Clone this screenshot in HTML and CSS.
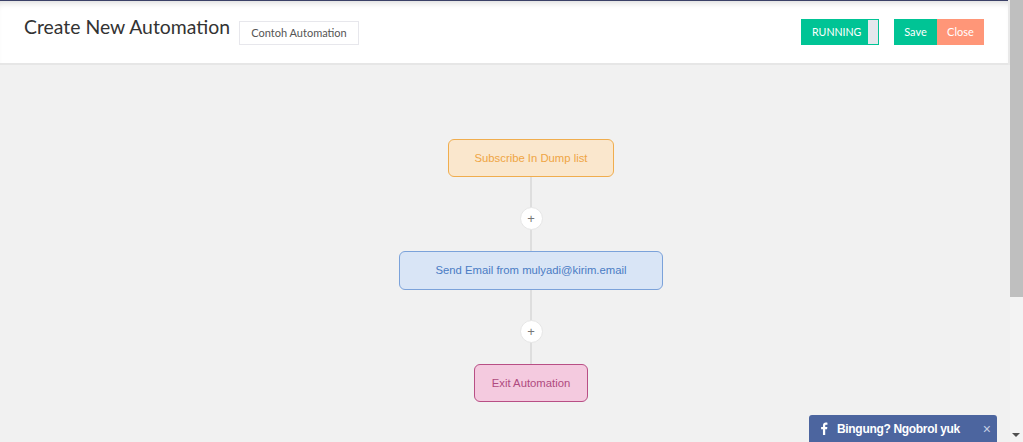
FILE: index.html
```html
<!DOCTYPE html>
<html lang="id">
<head>
<meta charset="utf-8">
<title>Create New Automation</title>
<link rel="stylesheet" href="styles.css">
</head>
<body>
<div class="page">
  <header class="topbar">
    <div class="title-group">
      <h1 class="title">Create New Automation</h1>
      <span class="name-box">Contoh Automation</span>
    </div>
    <div class="actions">
      <div class="toggle"><span class="toggle-label">RUNNING</span><span class="toggle-knob"></span></div>
      <div class="btn-group">
        <button class="btn btn-save">Save</button>
        <button class="btn btn-close">Close</button>
      </div>
    </div>
  </header>
  <main class="canvas">
    <div class="node node-list">Subscribe In Dump list</div>
    <div class="connector"><span class="add">+</span></div>
    <div class="node node-email">Send Email from mulyadi@kirim.email</div>
    <div class="connector"><span class="add">+</span></div>
    <div class="node node-exit">Exit Automation</div>
  </main>
</div>
<aside class="scrollbar"><div class="thumb"></div><div class="arrow"></div></aside>
<div class="chat">
  <svg class="fb" viewBox="0 0 10 16" width="8" height="13"><path d="M6.5 16V9h2.3l.4-2.8H6.5V4.5c0-.8.2-1.3 1.3-1.3h1.5V.7C9 .7 8.200 .6 7.300 .6 5.200 .6 3.700 1.900 3.700 4.200v2H1.400V9h2.300v7z" fill="#fff"/></svg>
  <span class="chat-text">Bingung? Ngobrol yuk</span>
  <span class="chat-x">×</span>
</div>
</body>
</html>
```
FILE: styles.css
```css
* { box-sizing: border-box; }
html, body { margin: 0; height: 442px; overflow: hidden; }
body { background: #f1f1f1; font-family: "Liberation Sans", Arial, sans-serif; display: flex; }
.page { width: 1010px; height: 442px; flex: none; }
.topbar {
  height: 65px;
  width: 1008px;
  background: #fff;
  border-top: 1px solid #3b4168;
  border-bottom: 2px solid #e6e6e6;
  box-shadow: inset 0 6px 6px -4px rgba(0,0,0,.14), 2px 0 0 #e9e9e9;
  display: flex;
  justify-content: space-between;
  padding: 18px 24px 0 24px;
}
.title-group { display: flex; align-items: flex-start; gap: 8px; }
.title { margin: 0; font: 400 19.4px/16px Lato, sans-serif; color: #333; width: 207px; white-space: nowrap; }
.name-box {
  width: 120px; height: 24px; border: 1px solid #e7e7ec; margin-top: 2px;
  font: 400 11px/22px Lato, sans-serif; color: #555; text-align: center;
}
.actions { display: flex; gap: 15px; align-items: flex-start; }
.toggle { width: 78px; height: 26px; background: #00c495; display: flex; justify-content: space-between; padding: 1px; }
.toggle-label { font: 400 10.6px/24px Lato, sans-serif; color: #fff; padding-left: 10px; }
.toggle-knob { width: 10px; background: #e4e7ec; }
.btn-group { display: flex; }
.btn { border: 0; height: 26px; padding: 0; font: 400 11px/26px Lato, sans-serif; color: #fff; }
.btn-save { width: 43px; background: #00c495; }
.btn-close { width: 47px; background: #ff9678; }
.canvas { display: flex; flex-direction: column; align-items: center; padding-top: 74px; width: 1062px; }
.node {
  height: 38px; border-radius: 6px; border: 1px solid; font-size: 11.3px; line-height: 36px; text-align: center;
}
.node-list { width: 166px; background: #fae7cd; border-color: #f0ad4e; color: #efa544; }
.node-email { width: 264px; height: 39px; line-height: 37px; background: #d9e5f6; border-color: #7ba2da; color: #4a7cc4; }
.node-exit { width: 114px; background: #f4cadf; border-color: #b84f85; color: #b04a80; }
.connector { width: 2px; height: 74px; padding-top: 8px; background: #dedede; display: flex; align-items: center; justify-content: center; }
.add {
  width: 23px; height: 23px; flex: none; border-radius: 50%; background: #fff; border: 1px solid #e6e6e6;
  font-size: 13px; line-height: 21px; text-align: center; color: #777;
}
.scrollbar { position: relative; width: 13px; height: 442px; background: #f3f3f3; }
.thumb { height: 297px; background: #bfbfbf; }
.arrow {
  position: absolute; left: 2px; top: 433px; width: 0; height: 0;
  border-left: 4px solid transparent; border-right: 4px solid transparent; border-top: 4px solid #505050;
}
.chat {
  position: fixed; left: 809px; top: 415px; width: 188px; height: 27px;
  background: #4c659f; border-radius: 3px 3px 0 0; color: #fff;
  display: flex; align-items: center; padding-left: 11px;
}
.fb { flex: none; }
.chat-text { font-size: 12px; font-weight: 700; margin-left: 9px; white-space: nowrap; letter-spacing: -.32px; }
.chat-x { margin-left: auto; margin-right: 6px; font-size: 14px; color: #c4cfe4; }
```
